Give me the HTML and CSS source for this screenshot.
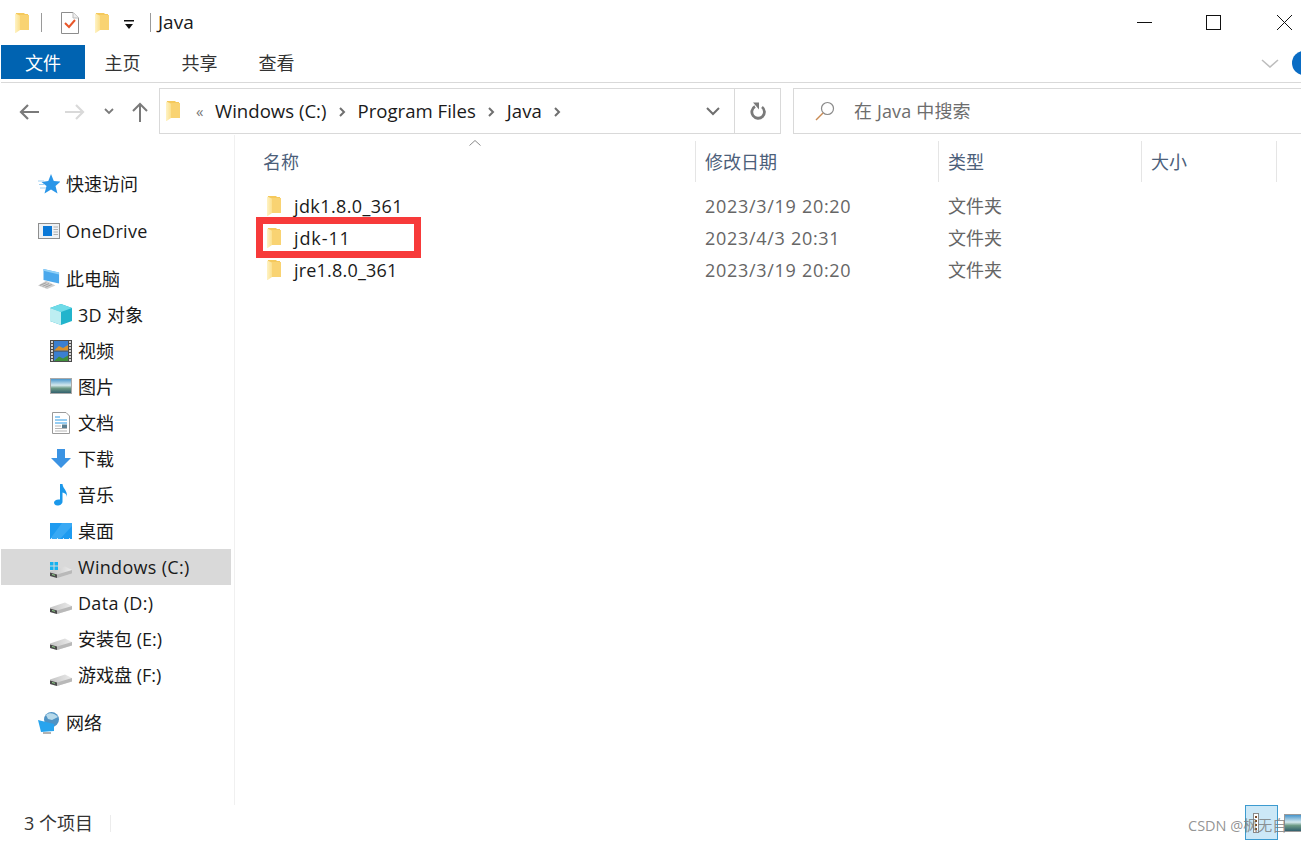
FILE: index.html
```html
<!DOCTYPE html>
<html lang="zh-CN">
<head>
    <meta charset="UTF-8">
    <title>Java</title>
    <link rel="stylesheet" href="styles.css">
</head>
<body>
    <!-- shared icons, referenced with <use> below -->
    <svg class="icon-defs">
        <defs>
            <linearGradient id="flap" x1="0" y1="0" x2="1" y2="0">
                <stop offset="0" stop-color="#fff3c4"/>
                <stop offset="1" stop-color="#fbe08e"/>
            </linearGradient>
            <linearGradient id="driveTop" x1="0" y1="0" x2="1" y2="0">
                <stop offset="0" stop-color="#c4c4c4"/>
                <stop offset="1" stop-color="#ececec"/>
            </linearGradient>
            <linearGradient id="pic" x1="0" y1="0" x2="0" y2="1">
                <stop offset="0" stop-color="#3d8fc9"/>
                <stop offset=".45" stop-color="#d5e9ee"/>
                <stop offset=".65" stop-color="#6d9a86"/>
                <stop offset="1" stop-color="#2c5a6b"/>
            </linearGradient>
        </defs>
        <symbol id="i-folder" viewBox="0 0 14 20">
            <path d="M1 0H9L10 1H13V17H1Z" fill="#f5c95c"/>
            <path d="M5 2H14V17H5Z" fill="#f9d372"/>
            <path d="M0 .5L5 2.500V17L0 20.500Z" fill="url(#flap)"/>
        </symbol>
        <symbol id="i-drive" viewBox="0 0 22 22">
            <path d="M0 15.500L15 10.500L22 14V17.500L7 22L0 20Z" fill="url(#driveTop)"/>
            <path d="M0 16.500L7 18.500V22L0 20Z" fill="#4a4a4a"/>
            <path d="M7 18.500L22 14V17.500L7 22Z" fill="#b9b9b9"/>
            <path d="M2 18.500l3 .8" stroke="#8fd18a" stroke-width="1"/>
        </symbol>
    </svg>

    <header class="titlebar">
        <svg class="qa-folder"><use href="#i-folder"/></svg>
        <span class="qa-sep"></span>
        <svg class="qa-doc" viewBox="0 0 18 22">
            <path d="M.5.5H12L17.5 6V21.5H.5Z" fill="#fff" stroke="#8d8d8d"/>
            <path d="M12 .5V6H17.5" fill="#eee" stroke="#bbb"/>
            <path d="M4 11L8 15L14 8" fill="none" stroke="#e8572a" stroke-width="2"/>
        </svg>
        <svg class="qa-folder second"><use href="#i-folder"/></svg>
        <svg class="qa-drop" viewBox="0 0 10 10">
            <path d="M0 0H10V1.500H0Z" fill="#111"/>
            <path d="M1 4H9L5 9Z" fill="#111"/>
        </svg>
        <span class="qa-sep last"></span>
        <span class="title">Java</span>
        <div class="window-btns">
            <svg viewBox="0 0 15 15"><path d="M0 7.500H15" stroke="#111"/></svg>
            <svg viewBox="0 0 15 15"><rect x=".5" y=".5" width="14" height="14" fill="none" stroke="#111"/></svg>
            <svg class="close" viewBox="0 0 15 15"><path d="M0 0L15 15M15 0L0 15" stroke="#111"/></svg>
        </div>
    </header>

    <nav class="ribbon">
        <a class="tab file">文件</a>
        <a class="tab">主页</a>
        <a class="tab">共享</a>
        <a class="tab">查看</a>
        <svg class="ribbon-toggle" viewBox="0 0 18 9">
            <path d="M1 1L9 8L17 1" fill="none" stroke="#bdbdbd" stroke-width="1.600"/>
        </svg>
        <span class="help"></span>
    </nav>

    <div class="toolbar">
        <div class="nav-btns">
            <svg class="back" viewBox="0 0 20 16"><path d="M20 8H2M9 1L2 8L9 15" fill="none" stroke="#7a7a7a" stroke-width="2.200"/></svg>
            <svg class="forward" viewBox="0 0 20 16"><path d="M0 8H18M11 1L18 8L11 15" fill="none" stroke="#d9d9d9" stroke-width="2.200"/></svg>
            <svg class="recent" viewBox="0 0 10 7"><path d="M1 1L5 5L9 1" fill="none" stroke="#7a7a7a" stroke-width="1.800"/></svg>
            <svg class="up" viewBox="0 0 16 20"><path d="M8 20V2M1 9L8 2L15 9" fill="none" stroke="#7a7a7a" stroke-width="2"/></svg>
        </div>
        <div class="address">
            <svg class="addr-folder"><use href="#i-folder"/></svg>
            <span class="crumb-more">«</span>
            <span class="crumb">Windows (C:)</span><svg class="crumb-arrow" viewBox="0 0 7 10"><path d="M1 1L5 5L1 9" fill="none" stroke="#6f6f6f" stroke-width="2"/></svg>
            <span class="crumb">Program Files</span><svg class="crumb-arrow" viewBox="0 0 7 10"><path d="M1 1L5 5L1 9" fill="none" stroke="#6f6f6f" stroke-width="2"/></svg>
            <span class="crumb">Java</span><svg class="crumb-arrow" viewBox="0 0 7 10"><path d="M1 1L5 5L1 9" fill="none" stroke="#6f6f6f" stroke-width="2"/></svg>
            <svg class="addr-drop" viewBox="0 0 14 9"><path d="M1 1L7 7L13 1" fill="none" stroke="#6f6f6f" stroke-width="2"/></svg>
            <span class="addr-refresh">
                <svg viewBox="0 0 16 18"><path d="M5 4.500A6.300 6.300 0 1 0 12 5" fill="none" stroke="#7a7a7a" stroke-width="2.800"/><path d="M3 .5H9V7.500Z" fill="#7a7a7a"/></svg>
            </span>
        </div>
        <div class="search">
            <svg viewBox="0 0 20 20"><circle cx="12.500" cy="7.500" r="6" fill="none" stroke="#8a8a8a" stroke-width="1.200"/><path d="M8 12L1 19" stroke="#c98b55" stroke-width="1.400"/></svg>
            <span>在 Java 中搜索</span>
        </div>
    </div>

    <main class="content">
        <aside class="sidebar">
            <div class="tree-group first">
                <div class="tree-item top">
                    <svg viewBox="0 0 22 22"><path d="M13 1L15.800 8L22.500 8.500L17.500 13L19.500 20.500L13 16.500L6.500 20.500L8.500 13L3.500 9L10.300 8Z" fill="#2a96e8"/><path d="M0 8H6M1 11.500H7M2 15H8" stroke="#9fd0f2" stroke-width="1"/></svg>
                    <span>快速访问</span>
                </div>
            </div>
            <div class="tree-group">
                <div class="tree-item top latin">
                    <svg viewBox="0 0 22 22"><rect x=".5" y="3.500" width="21" height="15" fill="#eef1f4" stroke="#8e8e8e"/><rect x="5" y="6" width="9" height="10" fill="#0a78d7"/><path d="M15.500 7H20M15.500 9.500H20M15.500 12H20M15.500 14.500H20" stroke="#b0b0b0"/></svg>
                    <span>OneDrive</span>
                </div>
            </div>
            <div class="tree-group">
                <div class="tree-item top">
                    <svg viewBox="0 0 24 24"><path d="M6 1L23 5V17L6 13Z" fill="#4aa8ec"/><path d="M6 1L23 5V7L6 3Z" fill="#8fd0f7"/><path d="M0 19L9 14L19 19L10 23Z" fill="#cfcfcf"/><path d="M2 19L9 16M5 20L12 17M8 21L15 18" stroke="#9c9c9c"/></svg>
                    <span>此电脑</span>
                </div>
                <div class="tree-item mixed">
                    <svg viewBox="0 0 22 22"><path d="M11 0L22 4V17L11 21L0 17V4Z" fill="#22b4cc"/><path d="M0 4L11 0L22 4L11 8Z" fill="#6fdbe8"/><path d="M0 4L11 8V21L0 17Z" fill="#bdeef2"/></svg>
                    <span>3D 对象</span>
                </div>
                <div class="tree-item">
                    <svg viewBox="0 0 22 22"><rect width="22" height="22" fill="#4b4b4b"/><rect x="4" y="1" width="14" height="9.500" fill="#3a7fd0"/><rect x="4" y="11.500" width="14" height="9.500" fill="#3a7fd0"/><path d="M4 10.500L9 6L13 8L18 5V10.500Z" fill="#d8912c"/><path d="M4 21L9 16.500L13 18.500L18 15.500V21Z" fill="#3f8f3c"/><path d="M1 2h2M1 5h2M1 8h2M1 11h2M1 14h2M1 17h2M1 20h2M19 2h2M19 5h2M19 8h2M19 11h2M19 14h2M19 17h2M19 20h2" stroke="#fff" stroke-width="1.400"/></svg>
                    <span>视频</span>
                </div>
                <div class="tree-item">
                    <svg viewBox="0 0 22 18"><rect x=".5" y=".5" width="21" height="15" fill="url(#pic)" stroke="#a9a9a9"/></svg>
                    <span>图片</span>
                </div>
                <div class="tree-item">
                    <svg viewBox="0 0 22 22"><path d="M2.500.5H16L19.500 4V21.500H2.500Z" fill="#fff" stroke="#9a9a9a"/><path d="M5 5H10M5 8H17M5 11H17" stroke="#2d9be6"/><path d="M5 14H11M5 16.500H17M5 19H17" stroke="#b5b5b5"/><rect x="12" y="12.500" width="5" height="3.500" fill="#5b7f92"/></svg>
                    <span>文档</span>
                </div>
                <div class="tree-item">
                    <svg viewBox="0 0 22 22"><path d="M7 1H15V10H21L11 20L1 10H7Z" fill="#3b93e3"/></svg>
                    <span>下载</span>
                </div>
                <div class="tree-item">
                    <svg viewBox="0 0 22 22"><path d="M10 0H12.500C13 5 17.500 6 17 13C16.800 10 14.500 9 12.500 8.500V17.500C12.500 20 10 21.500 7.500 21.500C5 21.500 4 20 4 18.500C4 16.500 6.500 15 10 15.500Z" fill="#1b98ea"/></svg>
                    <span>音乐</span>
                </div>
                <div class="tree-item">
                    <svg viewBox="0 0 22 18"><rect y="1" width="22" height="16" fill="#1e9bf0"/><path d="M0 17L12 1H22V4L10 17Z" fill="#39a9f4"/><path d="M1 16.500H21" stroke="#cfeaff" stroke-dasharray="1 5"/></svg>
                    <span>桌面</span>
                </div>
                <div class="tree-item selected latin">
                    <svg viewBox="0 0 22 22"><use href="#i-drive"/><path d="M0 6H3.500V9.500H0ZM4.500 6H8V9.500H4.500ZM0 10.500H3.500V14H0ZM4.500 10.500H8V14H4.500Z" fill="#16b2ef"/></svg>
                    <span>Windows (C:)</span>
                </div>
                <div class="tree-item latin">
                    <svg viewBox="0 0 22 22"><use href="#i-drive"/></svg>
                    <span>Data (D:)</span>
                </div>
                <div class="tree-item">
                    <svg viewBox="0 0 22 22"><use href="#i-drive"/></svg>
                    <span>安装包 (E:)</span>
                </div>
                <div class="tree-item">
                    <svg viewBox="0 0 22 22"><use href="#i-drive"/></svg>
                    <span>游戏盘 (F:)</span>
                </div>
            </div>
            <div class="tree-group">
                <div class="tree-item top">
                    <svg viewBox="0 0 22 22"><circle cx="13.500" cy="7.500" r="7.500" fill="#4f93c4"/><path d="M8 3C11 0 17 1 20 5L14 8L10 7Z" fill="#b6d9ea"/><path d="M0 8L16 12V19L3 20Z" fill="#27a4ee"/><path d="M5 21H13" stroke="#999" stroke-width="1.500"/></svg>
                    <span>网络</span>
                </div>
            </div>
        </aside>

        <section class="files">
            <div class="sort-mark"><svg viewBox="0 0 12 6"><path d="M.5 5.500L6 .5L11.500 5.500" fill="none" stroke="#8a8a8a"/></svg></div>
            <div class="file-head">
                <div class="col col-name">名称</div>
                <div class="col col-date">修改日期</div>
                <div class="col col-type">类型</div>
                <div class="col col-size">大小</div>
            </div>
            <div class="file-row">
                <div class="cell-name"><svg><use href="#i-folder"/></svg>jdk1.8.0_361</div>
                <div class="cell-date">2023/3/19 20:20</div>
                <div class="cell-type">文件夹</div>
            </div>
            <div class="file-row marked">
                <div class="cell-name short"><svg><use href="#i-folder"/></svg>jdk-11</div>
                <div class="cell-date">2023/4/3 20:31</div>
                <div class="cell-type">文件夹</div>
                <span class="red-box"></span>
            </div>
            <div class="file-row">
                <div class="cell-name tight"><svg><use href="#i-folder"/></svg>jre1.8.0_361</div>
                <div class="cell-date">2023/3/19 20:20</div>
                <div class="cell-type">文件夹</div>
            </div>
        </section>
    </main>

    <footer class="statusbar">
        <span class="count">3 个项目</span>
        <span class="status-sep"></span>
        <span class="view-tile">
            <svg viewBox="0 0 6 20"><rect x=".5" y=".5" width="5" height="19" fill="#fff" stroke="#8a8a8a"/><path d="M3 3V17" stroke="#7a4b2a" stroke-width="2" stroke-dasharray="2 2"/></svg>
        </span>
        <svg class="view-thumb" viewBox="0 0 24 18"><rect x=".5" y=".5" width="23" height="17" fill="url(#pic)" stroke="#9a9a9a"/></svg>
        <span class="watermark">CSDN @枫无自</span>
    </footer>
</body>
</html>
```

FILE: styles.css
```css
* {
    box-sizing: border-box;
}

html, body {
    margin: 0;
    padding: 0;
}

body {
    width: 1301px;
    height: 841px;
    overflow: hidden;
    display: flex;
    flex-direction: column;
    background-color: #ffffff;
    color: #1a1a1a;
    font-family: "Open Sans", "Noto Sans CJK SC", sans-serif;
    font-size: 18px;
}

.icon-defs {
    display: block;
    width: 0;
    height: 0;
}

svg {
    display: block;
    flex-shrink: 0;
}

/* title bar */
.titlebar {
    height: 45px;
    display: flex;
    align-items: center;
    padding-left: 15px;
}

.qa-folder {
    width: 14px;
    height: 20px;
    overflow: visible;
}

.qa-folder.second {
    margin-left: 16px;
}

.qa-sep {
    width: 1px;
    height: 19px;
    margin-left: 12px;
    background-color: #9a9a9a;
}

.qa-sep.last {
    margin-left: 16px;
}

.qa-doc {
    width: 18px;
    height: 22px;
    margin-left: 19px;
}

.qa-drop {
    width: 10px;
    height: 10px;
    margin-left: 15px;
    margin-top: 5px;
}

.title {
    margin-left: 7px;
    font-size: 19px;
    margin-top: -1px;
}

.window-btns {
    margin-left: auto;
    display: flex;
    gap: 54px;
    padding-right: 9px;
}

.window-btns svg {
    width: 15px;
    height: 15px;
}

.window-btns .close {
    margin-left: 2px;
}

/* ribbon */
.ribbon {
    height: 38px;
    margin-left: 1px;
    display: flex;
    align-items: flex-start;
    border-bottom: 1px solid #d9d9d9;
    overflow: hidden;
}

.tab {
    width: 77px;
    height: 34px;
    line-height: 36px;
    text-align: center;
    color: #333333;
}

.tab.file {
    width: 84px;
    margin-right: -1px;
    background-color: #0063b1;
    color: #ffffff;
}

.ribbon-toggle {
    width: 18px;
    height: 9px;
    margin: 14px 0 0 auto;
}

.help {
    width: 24px;
    height: 24px;
    margin: 6px -15px 0 13px;
    border-radius: 50%;
    background-color: #0a6cc4;
    flex-shrink: 0;
}

/* back/forward and address */
.toolbar {
    height: 52px;
    padding-top: 5px;
    display: flex;
    align-items: stretch;
}

.nav-btns {
    width: 159px;
    display: flex;
    align-items: center;
    padding-left: 19px;
}

.nav-btns .back,
.nav-btns .forward {
    width: 20px;
    height: 16px;
}

.nav-btns .forward {
    margin-left: 26px;
}

.nav-btns .recent {
    width: 10px;
    height: 7px;
    margin-left: 19px;
}

.nav-btns .up {
    width: 16px;
    height: 20px;
    margin-left: 18px;
}

.address {
    width: 622px;
    height: 46px;
    display: flex;
    align-items: center;
    border: 1px solid #d9d9d9;
    padding-left: 6px;
}

.addr-folder {
    width: 14px;
    height: 20px;
    overflow: visible;
}

.crumb-more {
    margin-left: 16px;
    width: 19px;
    color: #777777;
    font-size: 15px;
}

.crumb {
    font-size: 18.6px;
    margin-top: -2px;
}

.crumb-arrow {
    width: 7px;
    height: 10px;
    margin: 1px 12px 0 12px;
}

.addr-drop {
    width: 14px;
    height: 9px;
    margin-left: auto;
    margin-right: 14px;
}

.addr-refresh {
    width: 46px;
    height: 100%;
    display: flex;
    align-items: center;
    justify-content: center;
    border-left: 1px solid #d9d9d9;
}

.addr-refresh svg {
    width: 16px;
    height: 18px;
}

.search {
    flex: 1;
    height: 46px;
    margin-left: 12px;
    display: flex;
    align-items: center;
    border: 1px solid #d9d9d9;
    border-right: none;
    padding-left: 21px;
    padding-bottom: 2px;
    color: #6d6d6d;
    letter-spacing: 0.15px;
}

.search svg {
    width: 20px;
    height: 20px;
    margin-right: 19px;
    margin-top: 2px;
}

/* main area */
.content {
    height: 670px;
    display: flex;
}

.sidebar {
    width: 235px;
    padding-top: 31px;
    border-right: 1px solid #f0f0f0;
}

.tree-group {
    margin-top: 12px;
}

.tree-group.first {
    margin-top: 0;
}

.tree-group:nth-child(2) {
    margin-top: 11px;
}

.tree-item {
    height: 36px;
    width: 230px;
    margin-left: 1px;
    padding-left: 49px;
    display: flex;
    align-items: center;
    gap: 6px;
    color: #1a1a1a;
}

.tree-item span {
    margin-top: -2px;
}

.tree-item.mixed {
    letter-spacing: 0.3px;
}

.tree-item.latin {
    letter-spacing: 0.3px;
}

.tree-item.latin span {
    margin-top: 0;
}

.tree-item.top {
    padding-left: 37px;
}

.tree-item svg {
    width: 22px;
    height: 22px;
}

.tree-item.selected {
    background-color: #d9d9d9;
}

.files {
    flex: 1;
    padding-left: 20px;
    position: relative;
}

.sort-mark {
    height: 6px;
    padding-left: 214px;
    margin-top: 5px;
}

.sort-mark svg {
    width: 12px;
    height: 6px;
}

.file-head {
    height: 41px;
    margin-top: -5px;
    display: flex;
}

.col {
    line-height: 43px;
    color: #4c607a;
    border-right: 1px solid #e5e5e5;
    padding-left: 8px;
}

.col-name {
    width: 441px;
}

.col-date {
    width: 243px;
    padding-left: 9px;
}

.col-type {
    width: 203px;
    padding-left: 9px;
}

.col-size {
    width: 135px;
    padding-left: 9px;
}

.file-row {
    height: 32px;
    display: flex;
    align-items: center;
    position: relative;
    color: #666666;
}

.file-head + .file-row {
    margin-top: 8px;
}

.cell-name {
    width: 450px;
    padding-left: 12px;
    display: flex;
    align-items: center;
    gap: 13px;
    color: #1a1a1a;
    letter-spacing: 0.4px;
}

.cell-name.short {
    letter-spacing: 0.9px;
}

.cell-name.tight {
    letter-spacing: 0.2px;
}

.cell-name svg {
    width: 14px;
    height: 20px;
    overflow: visible;
}

.cell-date {
    width: 243px;
    letter-spacing: 0.7px;
}

.cell-type {
    margin-bottom: 2px;
}

/* hand-drawn marker round the folder */
.red-box {
    position: absolute;
    left: 1px;
    top: 1px;
    width: 165px;
    height: 41px;
    border: 7px solid #f73a3a;
    margin-top: -6px;
}

/* status bar */
.statusbar {
    flex: 1;
    display: flex;
    align-items: center;
    padding-left: 24px;
    position: relative;
}

.count {
    color: #333333;
    margin-top: -3px;
}

.status-sep {
    width: 1px;
    height: 17px;
    margin-left: 17px;
    margin-top: 1px;
    background-color: #ececec;
}

.view-tile {
    width: 33px;
    height: 35px;
    margin-left: auto;
    align-self: flex-start;
    display: flex;
    align-items: center;
    justify-content: center;
    background-color: #cce8f7;
    border: 1px solid #3d9bd0;
}

.view-tile svg {
    width: 6px;
    height: 20px;
    margin-right: 12px;
}

.view-thumb {
    width: 24px;
    height: 18px;
    margin: 0 -7px 0 6px;
}

.watermark {
    position: absolute;
    left: 1188px;
    top: 9px;
    font-size: 14.5px;
    color: rgba(120, 120, 120, 0.8);
    white-space: nowrap;
}
```
